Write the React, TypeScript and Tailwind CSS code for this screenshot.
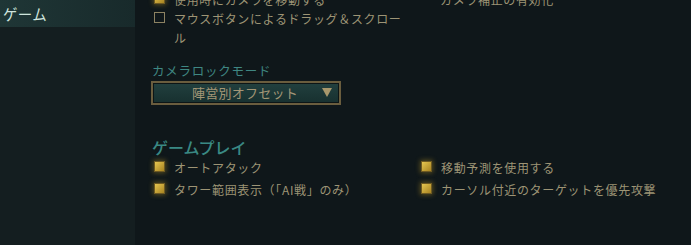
import React from 'react'

const font = { fontFamily: '"Noto Sans CJK JP", "Noto Sans", sans-serif' }

function Box({ checked }: { checked?: boolean }) {
  return checked ? (
    <span className="mt-[3px] box-border h-[11px] w-[11px] shrink-0 border border-[#6e5a22] bg-gradient-to-br from-[#e6c650] to-[#a88420] shadow-[0_0_5px_1px_rgba(200,160,40,0.4)]" />
  ) : (
    <span className="mt-[3px] box-border h-[11px] w-[11px] shrink-0 border border-[#8c8262]" />
  )
}

function Option({ label, checked }: { label: string; checked?: boolean }) {
  return (
    <div className="flex items-start gap-[9px] pl-[2px]">
      <Box checked={checked} />
      <span className="text-[12px] leading-[19px] tracking-[0.055em] text-[#9d9475]">{label}</span>
    </div>
  )
}

export default function App() {
  return (
    <div className="flex h-[245px] w-[691px] overflow-hidden bg-[#0f171a]" style={font}>
      {/* sidebar */}
      <aside className="w-[135px] shrink-0 bg-[#141e20]">
        <div className="flex h-[27px] items-center bg-gradient-to-r from-[#1f3636] to-[#182a2b] pl-[3px] text-[14.5px] tracking-[0.02em] text-[#cfe4dd]">
          ゲーム
        </div>
      </aside>

      {/* content */}
      <main className="flex-1 pl-[17px]">
        <div className="flex items-start">
          <div className="-mt-[10px] w-[267px] shrink-0">
            <Option label="使用時にカメラを移動する" checked />
            <div className="w-[252px]">
              <Option label="マウスボタンによるドラッグ＆スクロール" />
            </div>
          </div>
          <div className="-mt-[29px] w-[230px] pl-[21px] text-[12px] leading-[19px] tracking-[0.055em] text-[#9d9475]">
            <div>ワールド座標での</div>
            <div>カメラ補正の有効化</div>
          </div>
        </div>

        <div className="mt-[14px] text-[12.5px] leading-[19px] tracking-[0.06em] text-[#3f8782]">
          カメラロックモード
        </div>
        <button className="relative -ml-px mt-[1px] flex h-[24px] w-[190px] items-center justify-center border-2 border-[#6a5d3e] bg-gradient-to-b from-[#22403f] to-[#17302f] shadow-[inset_0_0_0_1px_#0c1516]">
          <span className="pr-[2px] text-[13px] tracking-[0.02em] text-[#a39676]">陣営別オフセット</span>
          <svg className="absolute right-[7px] top-[5px]" width="10" height="9" viewBox="0 0 10 9">
            <path d="M0 0H10L5 9Z" fill="#a8986c" />
          </svg>
        </button>

        <div className="mt-[31px] text-[16px] font-medium leading-[22px] text-[#3a8984]">
          ゲームプレイ
        </div>
        <div className="mt-[0px] grid grid-cols-[267px_1fr] gap-y-[3px]">
          <Option label="オートアタック" checked />
          <Option label="移動予測を使用する" checked />
          <Option label="タワー範囲表示（「AI戦」のみ）" checked />
          <Option label="カーソル付近のターゲットを優先攻撃" checked />
        </div>
      </main>
    </div>
  )
}
